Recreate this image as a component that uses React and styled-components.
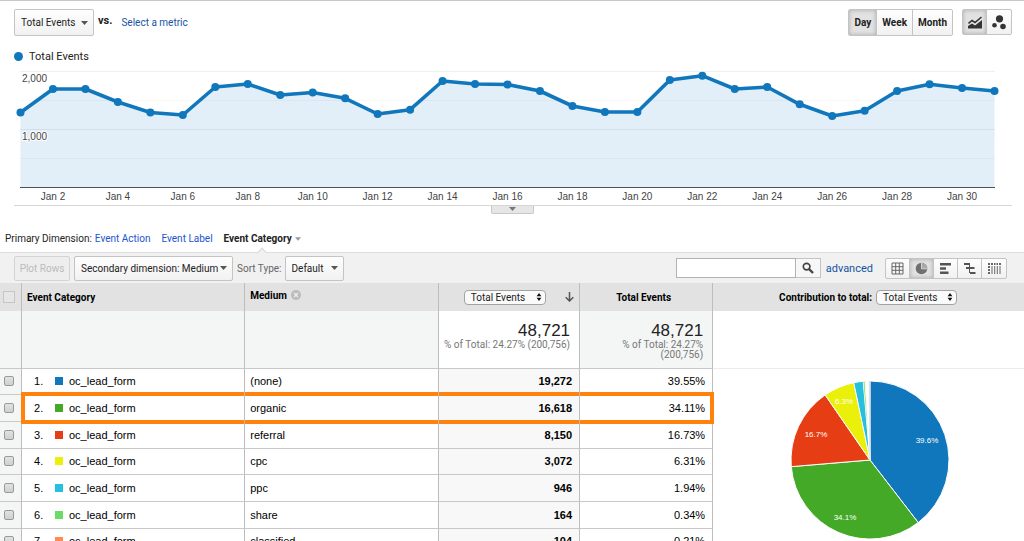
import React from "react";
import styled, { createGlobalStyle, css } from "styled-components";

const ROBOTO = `Roboto, "Open Sans", sans-serif`;
const ARIAL = `"Liberation Sans", Arial, sans-serif`;

const Global = createGlobalStyle`
  *, *::before, *::after { box-sizing: border-box; }
  body { margin: 0; background: #fff; color: #222; font-family: ${ROBOTO}; font-size: 10px; }
  button, select, input { font: inherit; color: inherit; margin: 0; }
`;

const Page = styled.main`
  height: 100vh;
  overflow: hidden;
  border-top: 1px solid #c9c9c9;
`;

const face = css`
  background: linear-gradient(#fefefe, #f1f1f1);
  border: 1px solid #c4c4c4;
  border-radius: 2px;
`;

const pressed = css`
  background: #e2e2e2;
  box-shadow: inset 0 0 4px rgba(0, 0, 0, 0.25);
`;

const MetricBar = styled.header`
  display: flex;
  align-items: flex-start;
  padding: 8px 12px 0 14px;
`;

const SelectBox = styled.span`
  position: relative;
  display: inline-flex;
  flex: none;
  width: ${(p) => p.$width}px;
  color: #222;

  svg {
    position: absolute;
    right: ${(p) => (p.$native ? 4 : 6)}px;
    top: 50%;
    transform: translateY(-50%);
    pointer-events: none;
  }
`;

const FaceSelect = styled.select`
  ${face}
  appearance: none;
  width: 100%;
  height: ${(p) => p.$height}px;
  padding: 0 0 0 6px;
`;

const NativeSelect = styled.select`
  appearance: none;
  width: 100%;
  height: 15px;
  padding: 0 0 0 6px;
  border: 1px solid #a3a3a3;
  border-radius: 4px;
  background: #fafafa;
  font-weight: 400;
`;

const Versus = styled.strong`
  margin: 5px 9px 0 4px;
  font-size: 11px;
  line-height: 14px;
`;

const MetricLink = styled.a`
  margin-top: 7px;
  color: #15549f;
  font-size: 10px;
  line-height: 14px;
  text-decoration: none;
`;

const Group = styled.div`
  display: flex;
  height: ${(p) => p.$height}px;
  margin-left: ${(p) => p.$gap || 0}px;
  ${face}
  overflow: hidden;
`;

const GroupButton = styled.button`
  display: flex;
  align-items: center;
  justify-content: center;
  min-width: 24px;
  padding: 0 ${(p) => p.$pad || 0}px;
  border: 0;
  border-right: 1px solid #c4c4c4;
  background: transparent;
  font-weight: 700;
  ${(p) => p.$on && pressed}

  &:last-child { border-right: 0; }
`;

const Spacer = styled.div`
  flex: 1;
`;

const Legend = styled.div`
  display: flex;
  align-items: center;
  gap: 6px;
  height: 16px;
  margin: 12px 0 0 14px;
  font-size: 11px;

  &::before {
    content: "";
    width: 9px;
    height: 9px;
    border-radius: 50%;
    background: #1077bc;
  }
`;

const ChartFrame = styled.section`
  margin: 2px 12px 0 14px;
  border-bottom: 1px solid #d6d6d6;

  svg { display: block; width: 100%; height: auto; }
`;

const Handle = styled.button`
  display: flex;
  justify-content: center;
  width: 43px;
  height: 8px;
  margin: 0 auto;
  padding: 1px 0 0;
  border: 1px solid #c8c8c8;
  border-top: 0;
  border-radius: 0 0 2px 2px;
  background: #e6e6e6;
`;

const Dimensions = styled.nav`
  display: flex;
  align-items: center;
  height: 27px;
  margin-top: 11px;
  padding: 0 0 0 5px;
  font-size: 10px;
`;

const DimensionLink = styled.a`
  margin-left: ${(p) => p.$gap}px;
  color: #1c54d0;
  text-decoration: none;
`;

const Current = styled.button`
  position: relative;
  display: flex;
  align-items: center;
  gap: 3px;
  height: 100%;
  margin-left: 11px;
  padding: 0;
  border: 0;
  background: none;
  font-weight: 700;

  &::after {
    content: "";
    position: absolute;
    left: 50%;
    bottom: -4px;
    width: 7px;
    height: 7px;
    border: 1px solid #d8d8d8;
    border-width: 1px 0 0 1px;
    background: #f1f1f1;
    transform: translateX(-50%) rotate(45deg);
  }
`;

const Tools = styled.div`
  display: flex;
  align-items: center;
  height: 31px;
  padding: 0 17px 0 14px;
  border-top: 1px solid #dedede;
  background: #f1f1f1;
`;

const PlotRows = styled.button`
  width: 56px;
  height: 25px;
  margin-right: 4px;
  padding: 0;
  border: 1px solid #d4d4d4;
  border-radius: 2px;
  background: #eee;

  &:disabled { color: #bbb; }
`;

const SortLabel = styled.label`
  margin: 0 3px 0 4px;
  color: #666;
`;

const Search = styled.form`
  display: flex;
  width: 145px;
  height: 20px;
`;

const SearchInput = styled.input`
  flex: 1;
  min-width: 0;
  border: 1px solid #b3b3b3;
  background: #fff;
`;

const SearchButton = styled.button`
  display: flex;
  align-items: center;
  justify-content: center;
  width: 25px;
  padding: 0;
  border: 1px solid #c4c4c4;
  border-left: 0;
  background: #f7f7f7;
`;

const Advanced = styled.a`
  margin: 0 0 0 5px;
  color: #15549f;
  font-size: 11px;
  text-decoration: none;
`;

const Table = styled.table`
  width: 100%;
  table-layout: fixed;
  border-collapse: separate;
  border-spacing: 0;
  color: #000;
  font-family: ${ARIAL};
  font-size: 11px;
`;

const Col = styled.col`
  width: ${(p) => p.$w};
`;

const Head = styled.th`
  height: 28px;
  padding: 0 ${(p) => (p.$align ? 10 : 5)}px 0 5px;
  border-right: 1px solid #bdbdbd;
  background: #e2e2e2;
  font-family: ${ROBOTO};
  font-size: 10px;
  text-align: ${(p) => p.$align || "left"};

  &:last-child { border-right: 0; }
`;

const HeadTools = styled.div`
  display: flex;
  align-items: center;
  justify-content: ${(p) => (p.$spread ? "space-between" : "center")};
  gap: 4px;
  padding-left: ${(p) => (p.$spread ? 20 : 0)}px;
  padding-right: ${(p) => (p.$spread ? 0 : 1)}px;
`;

const MediumHead = styled.div`
  display: flex;
  align-items: center;
  gap: 4px;
  padding-bottom: 4px;
`;

const RemoveButton = styled.button`
  display: flex;
  padding: 0;
  border: 0;
  background: none;
`;

const Total = styled.td`
  height: 58px;
  padding: 10px 9px 0 4px;
  border-right: 1px solid #bdbdbd;
  border-bottom: 1px solid #c8c8c8;
  background: ${(p) => (p.$plain ? "#fff" : "#f4f6f6")};
  color: #777;
  font-family: ${ROBOTO};
  font-size: 10px;
  line-height: 10px;
  text-align: right;
  vertical-align: top;
  white-space: ${(p) => (p.$plain ? "nowrap" : "normal")};

  &:last-child { border-right: 0; border-bottom-color: #ececec; }
`;

const TotalValue = styled.div`
  color: #222;
  font-family: ${ARIAL};
  font-size: 17px;
  line-height: 19px;
`;

const orangeCell = css`
  position: relative;

  &::after {
    content: "";
    position: absolute;
    inset: -3px 0;
    border: solid #ff820d;
    border-width: 4px 0;
  }
  &:nth-child(2)::after { left: -1px; border-left-width: 4px; }
  &:nth-child(5)::after { right: -2px; border-right-width: 4px; }
`;

const Cell = styled.td`
  padding: 0 7px 1px 5px;
  border-right: 1px solid #bdbdbd;
  border-bottom: 1px solid #c8c8c8;
  background: ${(p) => p.$bg || "#fff"};
  font-weight: ${(p) => (p.$bold ? 700 : 400)};
  text-align: ${(p) => p.$align || "left"};
`;

const Row = styled.tr`
  height: 27px;
  &:nth-child(3n + 2) { height: 26px; }
  ${(p) => p.$marked && css`${Cell}:not(:first-child) { ${orangeCell} }`}
`;

const PieCell = styled.td`
  padding: 11px 0 0 2px;
  vertical-align: top;
  text-align: center;

  svg { display: block; margin: 0 auto; }
`;

const Check = styled.input`
  appearance: none;
  display: block;
  width: ${(p) => (p.$flat ? 12 : 10)}px;
  height: ${(p) => (p.$flat ? 12 : 10)}px;
  margin-left: ${(p) => (p.$flat ? -2 : -1)}px;
  border: 1px solid ${(p) => (p.$flat ? "#c6c6c6" : "#999")};
  border-radius: ${(p) => (p.$flat ? 0 : 2)}px;
  background: ${(p) => (p.$flat ? "#e6e6e6" : "linear-gradient(#e2e2e2, #cfcfcf)")};
`;

const Name = styled.div`
  display: flex;
  align-items: center;
  padding-left: 7px;
`;

const Rank = styled.span`
  width: 21px;
`;

const Swatch = styled.span`
  width: 8px;
  height: 8px;
  margin-right: 6px;
  background: ${(p) => p.$color};
`;

const Caret = ({ color = "#555", w = 7 }) => (
  <svg width={w} height="4" viewBox="0 0 7 4" aria-hidden="true">
    <path d="M0 0h7L3.5 4z" fill={color} />
  </svg>
);

const UpDown = () => (
  <svg width="6" height="9" viewBox="0 0 6 9" aria-hidden="true">
    <path d="M.6 3.8h4.8L3 .4zM.6 5.2h4.8L3 8.6z" fill="#111" />
  </svg>
);

const values = [
  112.5, 89, 89, 102, 112.5, 115, 87, 84, 95, 92.5, 98.3, 114, 109.7, 81, 84, 84.5,
  91, 106, 112, 112, 80, 75.7, 89, 87, 104.3, 116, 110.7, 91, 84.3, 88, 91,
];
const points = values.map((y, i) => [6.5 + i * 32.467, y - 66]);

function LineChart() {
  const line = points.map(([x, y]) => `${x},${y}`).join(" ");
  return (
    <svg viewBox="0 0 998 139" role="img" aria-label="Total Events per day">
      <polygon points={`6.5,121.5 ${line} 980.5,121.5`} fill="#e2eff8" />
      <g stroke="#000" strokeOpacity="0.06">
        <path d="M6 5.5h975M6 63.5h975" />
        <path d="M6 34.5h975M6 92.5h975" strokeOpacity="0.03" />
      </g>
      <path d="M6 121.5h975" stroke="#4b5155" />
      <polyline points={line} fill="none" stroke="#1077bc" strokeWidth="3.6" strokeLinejoin="round" />
      {points.map(([x, y]) => (
        <circle key={x} cx={x} cy={y} r="4" fill="#1077bc" />
      ))}
      <g fontFamily="Liberation Sans, Arial, sans-serif" fontSize="10" fill="#444">
        <g stroke="#fff" strokeWidth="2" paintOrder="stroke" strokeLinejoin="round">
          <text x="8" y="16">2,000</text>
          <text x="8" y="74">1,000</text>
        </g>
        {Array.from({ length: 15 }, (_, i) => (
          <text key={i} x={points[i * 2 + 1][0]} y="134" textAnchor="middle">
            Jan {i * 2 + 2}
          </text>
        ))}
      </g>
    </svg>
  );
}

const slices = [
  [39.55, "#1077bc"],
  [34.11, "#43a926"],
  [16.73, "#e63d14"],
  [6.31, "#ebf00a"],
  [1.94, "#25bfe0"],
  [0.34, "#6adb64"],
  [0.21, "#ffd9c6"],
  [0.3, "#fff"],
  [0.3, "#f3f3f3"],
  [0.21, "#e3e3e3"],
];

function Pie() {
  let sum = 0;
  const at = (t) => {
    const a = (t / 100) * Math.PI * 2;
    return `${80 + 79 * Math.sin(a)} ${80 - 79 * Math.cos(a)}`;
  };
  return (
    <svg width="160" height="160" viewBox="0 0 160 160" role="img" aria-label="Contribution to total">
      {slices.map(([v, color]) => {
        const start = sum;
        sum += v;
        return (
          <path
            key={color}
            d={`M80 80L${at(start)}A79 79 0 0 1 ${at(sum)}z`}
            fill={color}
            stroke="#fff"
            strokeWidth={v < 1 ? 0.5 : 1}
          />
        );
      })}
      <path d="M80 80V1" stroke="#c8d3da" />
      <g fontFamily="Liberation Sans, Arial, sans-serif" fontSize="8" fill="#fff" textAnchor="middle">
        <text x="137" y="63">39.6%</text>
        <text x="55" y="140">34.1%</text>
        <text x="26" y="57">16.7%</text>
        <text x="54" y="24">6.3%</text>
      </g>
    </svg>
  );
}

const rows = [
  ["(none)", "19,272", "39.55%", "#1077bc"],
  ["organic", "16,618", "34.11%", "#43a926"],
  ["referral", "8,150", "16.73%", "#e63d14"],
  ["cpc", "3,072", "6.31%", "#ebf00a"],
  ["ppc", "946", "1.94%", "#25bfe0"],
  ["share", "164", "0.34%", "#6adb64"],
  ["classified", "104", "0.21%", "#ff8a50"],
];

const viewIcons = {
  Data: <path d="M1 1h11v11H1zM1 4.7h11M1 8.3h11M4.7 1v11M8.3 1v11" fill="none" stroke="#666" />,
  Percentage: (
    <>
      <circle cx="6.5" cy="6.5" r="5.8" fill="#707070" />
      <path d="M7 1v5.5h5.2A5.5 5.5 0 0 0 7 1z" fill="#aaa" />
      <path d="M6.5 .8v6h5.7" fill="none" stroke="#eee" strokeWidth=".8" />
    </>
  ),
  Performance: <path d="M1 1h11v2.4H1zM1 5.3h6v2.4H1zM1 9.6h8.500v2.400H1z" fill="#555" />,
  Comparison: <path d="M1 1h6v2H1zM6 3h1v8H6zM7 5h4.500v2H7zM3 5h3v2H3zM7 10h5.500v2H7z" fill="#555" />,
  Pivot: (
    <path d="M0 1h2v2H0zM3 1h2v2H3zM6 1h1.500v2H6zM8.500 1H10v2H8.500zM11 1h2v2h-2zM0 4h2v2H0zM0 7h2v2H0zM0 10h2v2H0zM3.500 4h1v8h-1zM6.200 4h1v8h-1zM8.800 4h1v8h-1zM11.500 4h1v8h-1z" fill="#666" />
  ),
};

export default function App() {
  return (
    <Page>
      <Global />
      <MetricBar>
        <SelectBox $width={80}>
          <FaceSelect $height={27} aria-label="Metric">
            <option>Total Events</option>
          </FaceSelect>
          <Caret />
        </SelectBox>
        <Versus>vs.</Versus>
        <MetricLink href="#metric">Select a metric</MetricLink>
        <Spacer />
        <Group $height={27}>
          <GroupButton $pad={5} $on>Day</GroupButton>
          <GroupButton $pad={5}>Week</GroupButton>
          <GroupButton $pad={5}>Month</GroupButton>
        </Group>
        <Group $height={26} $gap={9}>
          <GroupButton $on aria-label="Line chart">
            <svg width="14" height="13" viewBox="0 0 14 13">
              <path d="M0 12.500V10l4-2.500 3 2 7-5.500v8.500z" fill="#333" />
              <path d="M.5 7.500l3.500-3 3 2L13.500 1" fill="none" stroke="#333" strokeWidth="1.600" />
            </svg>
          </GroupButton>
          <GroupButton aria-label="Motion chart">
            <svg width="15" height="15" viewBox="0 0 15 15" fill="#333">
              <circle cx="7.500" cy="3.800" r="3.600" />
              <circle cx="2.500" cy="10.200" r="2.300" />
              <circle cx="11" cy="11.500" r="2.800" />
            </svg>
          </GroupButton>
        </Group>
      </MetricBar>
      <Legend>Total Events</Legend>
      <ChartFrame>
        <LineChart />
      </ChartFrame>
      <Handle aria-label="Show annotations">
        <Caret color="#777" />
      </Handle>
      <Dimensions>
        <span>Primary Dimension:</span>
        <DimensionLink $gap={3} href="#action">Event Action</DimensionLink>
        <DimensionLink $gap={11} href="#label">Event Label</DimensionLink>
        <Current>
          Event Category <Caret color="#999" w={6} />
        </Current>
      </Dimensions>
      <Tools>
        <PlotRows disabled>Plot Rows</PlotRows>
        <SelectBox $width={159}>
          <FaceSelect $height={25} aria-label="Secondary dimension">
            <option>Secondary dimension: Medium</option>
          </FaceSelect>
          <Caret />
        </SelectBox>
        <SortLabel htmlFor="sort">Sort Type:</SortLabel>
        <SelectBox $width={59}>
          <FaceSelect $height={25} id="sort">
            <option>Default</option>
          </FaceSelect>
          <Caret />
        </SelectBox>
        <Spacer />
        <Search>
          <SearchInput type="text" aria-label="Search" />
          <SearchButton type="button" aria-label="Search rows">
            <svg width="12" height="12" viewBox="0 0 12 12" fill="none" stroke="#444">
              <circle cx="4.600" cy="4.600" r="3.300" strokeWidth="1.700" />
              <path d="M7 7l4 4" strokeWidth="2.400" />
            </svg>
          </SearchButton>
        </Search>
        <Advanced href="#advanced">advanced</Advanced>
        <Group $height={21} $gap={12}>
          {Object.entries(viewIcons).map(([name, icon]) => (
            <GroupButton key={name} aria-label={name} $on={name === "Percentage"}>
              <svg width="13" height="13" viewBox="0 0 13 13">{icon}</svg>
            </GroupButton>
          ))}
        </Group>
      </Tools>
      <Table>
        <colgroup>
          <Col $w="22px" />
          <Col $w="21.8%" />
          <Col $w="18.9%" />
          <Col $w="13.8%" />
          <Col $w="13%" />
          <Col />
        </colgroup>
        <thead>
          <tr>
            <Head><Check type="checkbox" $flat aria-label="Select all rows" /></Head>
            <Head>Event Category</Head>
            <Head>
              <MediumHead>
                Medium
                <RemoveButton aria-label="Remove Medium">
                  <svg width="10" height="10" viewBox="0 0 10 10">
                    <circle cx="5" cy="5" r="5" fill="#bbb" />
                    <path d="M3 3l4 4M7 3L3 7" stroke="#eee" strokeWidth="1.300" />
                  </svg>
                </RemoveButton>
              </MediumHead>
            </Head>
            <Head>
              <HeadTools $spread>
                <SelectBox $width={82} $native>
                  <NativeSelect aria-label="Column metric"><option>Total Events</option></NativeSelect>
                  <UpDown />
                </SelectBox>
                <svg width="9" height="10" viewBox="0 0 9 10" fill="none" stroke="#555" strokeWidth="1.500">
                  <path d="M4.500 0v9M.7 5.200l3.800 3.800 3.800-3.800" />
                </svg>
              </HeadTools>
            </Head>
            <Head $align="center">Total Events</Head>
            <Head>
              <HeadTools>
                <label htmlFor="contribution">Contribution to total:</label>
                <SelectBox $width={81} $native>
                  <NativeSelect id="contribution"><option>Total Events</option></NativeSelect>
                  <UpDown />
                </SelectBox>
              </HeadTools>
            </Head>
          </tr>
        </thead>
        <tbody>
          <tr>
            <Total />
            <Total />
            <Total />
            <Total $plain>
              <TotalValue>48,721</TotalValue>% of Total: 24.27% (200,756)
            </Total>
            <Total>
              <TotalValue>48,721</TotalValue>% of Total: 24.27% (200,756)
            </Total>
            <Total $plain />
          </tr>
          {rows.map(([medium, total, share, color], i) => (
            <Row key={medium} $marked={i === 1}>
              <Cell $bg="#f4f6f6"><Check type="checkbox" aria-label={`Select ${medium}`} /></Cell>
              <Cell>
                <Name>
                  <Rank>{i + 1}.</Rank>
                  <Swatch $color={color} />
                  oc_lead_form
                </Name>
              </Cell>
              <Cell>{medium}</Cell>
              <Cell $bg="#f8f8f8" $bold $align="right">{total}</Cell>
              <Cell $align="right">{share}</Cell>
              {i === 0 && <PieCell rowSpan={rows.length}><Pie /></PieCell>}
            </Row>
          ))}
        </tbody>
      </Table>
    </Page>
  );
}
